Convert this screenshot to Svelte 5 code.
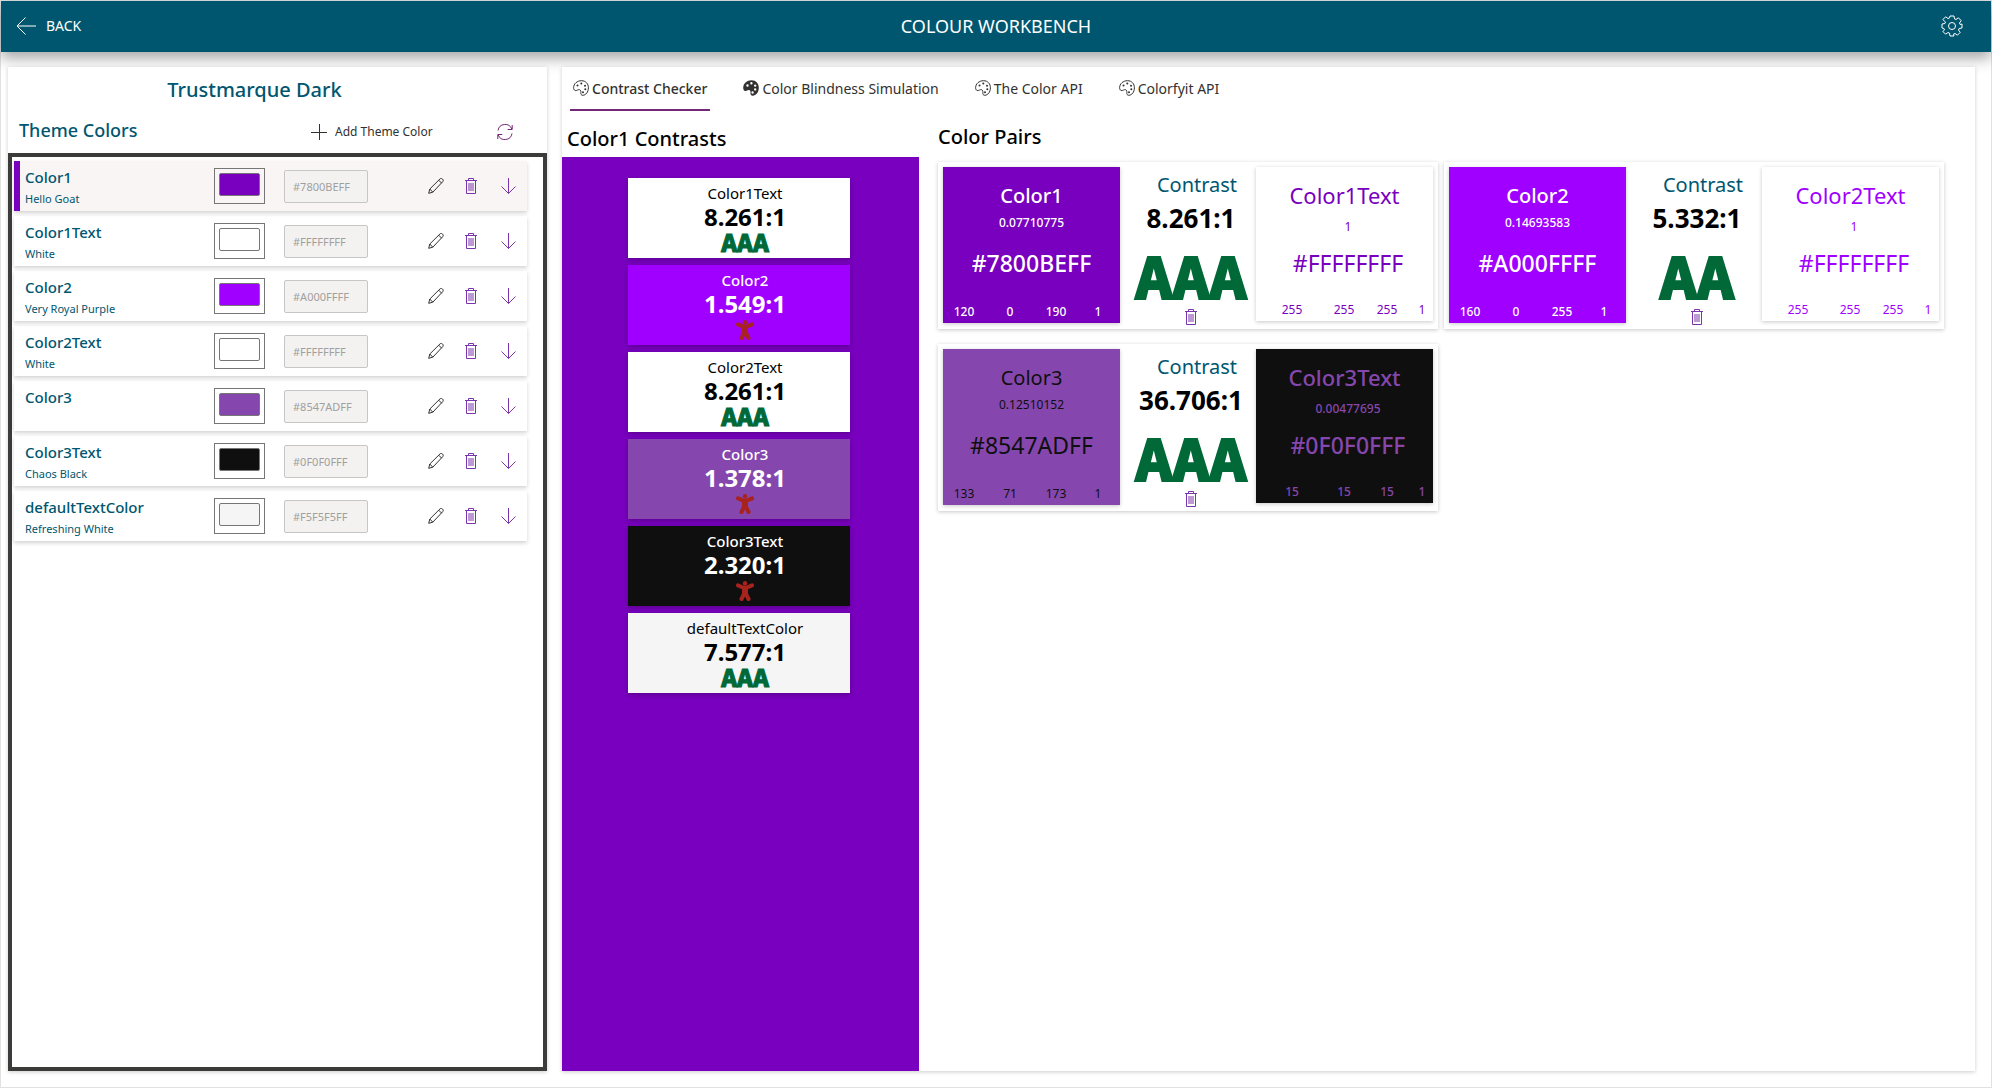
<script>
  const themeColors = [
    { name: 'Color1', alias: 'Hello Goat', hex: '#7800BE' },
    { name: 'Color1Text', alias: 'White', hex: '#FFFFFF' },
    { name: 'Color2', alias: 'Very Royal Purple', hex: '#A000FF' },
    { name: 'Color2Text', alias: 'White', hex: '#FFFFFF' },
    { name: 'Color3', alias: '', hex: '#8547AD' },
    { name: 'Color3Text', alias: 'Chaos Black', hex: '#0F0F0F' },
    { name: 'defaultTextColor', alias: 'Refreshing White', hex: '#F5F5F5' }
  ];

  const contrasts = [
    { name: 'Color1Text', ratio: '8.261:1', grade: 'AAA', bg: '#ffffff', fg: '#000000' },
    { name: 'Color2', ratio: '1.549:1', grade: '', bg: '#a000ff', fg: '#ffffff' },
    { name: 'Color2Text', ratio: '8.261:1', grade: 'AAA', bg: '#ffffff', fg: '#000000' },
    { name: 'Color3', ratio: '1.378:1', grade: '', bg: '#8547ad', fg: '#ffffff' },
    { name: 'Color3Text', ratio: '2.320:1', grade: '', bg: '#0f0f0f', fg: '#ffffff' },
    { name: 'defaultTextColor', ratio: '7.577:1', grade: 'AAA', bg: '#f5f5f5', fg: '#000000' }
  ];

  const pairs = [
    {
      ratio: '8.261:1',
      grade: 'AAA',
      base: { name: 'Color1', lum: '0.07710775', hex: '#7800BEFF', rgba: [120, 0, 190, 1] },
      text: { name: 'Color1Text', lum: '1', hex: '#FFFFFFFF', rgba: [255, 255, 255, 1] }
    },
    {
      ratio: '5.332:1',
      grade: 'AA',
      base: { name: 'Color2', lum: '0.14693583', hex: '#A000FFFF', rgba: [160, 0, 255, 1] },
      text: { name: 'Color2Text', lum: '1', hex: '#FFFFFFFF', rgba: [255, 255, 255, 1] }
    },
    {
      ratio: '36.706:1',
      grade: 'AAA',
      base: { name: 'Color3', lum: '0.12510152', hex: '#8547ADFF', rgba: [133, 71, 173, 1] },
      text: { name: 'Color3Text', lum: '0.00477695', hex: '#0F0F0FFF', rgba: [15, 15, 15, 1] }
    }
  ];

  const tabs = ['Contrast Checker', 'Color Blindness Simulation', 'The Color API', 'Colorfyit API'];

  let selected = $state(0);
  let activeTab = $state(0);
</script>

{#snippet trash()}
  <svg class="icon" viewBox="0 0 16 16" aria-hidden="true">
    <path d="M2 2.5h12M5.500 2.500v-2h5v2M3.500 2.500v13h9v-13M6 5v8M8 5v8M10 5v8" />
  </svg>
{/snippet}

{#snippet palette(solid)}
  <svg class="icon palette" class:solid viewBox="0 0 16 16" aria-hidden="true">
    {#if solid}
      <path
        fill-rule="evenodd"
        d="M8.500.3C13 .3 15.800 3.500 15.800 7.800c0 4.500-2.800 7.900-6 7.900-2 0-2.500-1.500-2.300-3 .2-1.700-.5-2.900-1.900-2.600-1.300.3-2.300 1.300-3.700.8C.7 10.400.2 9.200.2 7.700.2 3.500 4 .3 8.500.3zM3.300 5.500a1.200 1.200 0 1 0 2.400 0 1.200 1.200 0 1 0-2.400 0zM7.200 3.200a1.200 1.200 0 1 0 2.400 0 1.200 1.200 0 1 0-2.400 0zM11 5.600a1.200 1.200 0 1 0 2.400 0 1.200 1.200 0 1 0-2.400 0zM11 9.400a1.200 1.200 0 1 0 2.400 0 1.200 1.200 0 1 0-2.400 0zM8.400 12.500a1.200 1.200 0 1 0 2.400 0 1.200 1.200 0 1 0-2.400 0z"
      />
    {:else}
      <path
        d="M8.500.7C12.700.7 15.400 3.700 15.400 7.800c0 4.300-2.700 7.500-5.600 7.500-1.700 0-2.100-1.200-1.900-2.600.2-2-.7-3.400-2.400-3-1.300.3-2.200 1.200-3.400.8C1 10 .6 9 .6 7.700.6 3.700 4.300.7 8.500.7z"
      />
      <path class="dots" d="M4.500 5.500h.01M8.300 3.500h.01M12 5.800h.01M12.300 9.300h.01M10 12.300h.01" />
    {/if}
  </svg>
{/snippet}

<div class="app">
  <header>
    <button class="back">
      <svg class="icon" viewBox="0 0 20 20" aria-hidden="true"><path d="M20 10H1M9.500 1.500 1 10l8.500 8.500" /></svg>
      <span>BACK</span>
    </button>
    <h1>COLOUR WORKBENCH</h1>
    <button class="settings" aria-label="Settings">
      <svg class="icon" viewBox="0 0 22 22" aria-hidden="true">
        <path
          d="M9 1h4l.5 2.900 1.500.6 2.400-1.700 2.800 2.800-1.700 2.400.6 1.500L21 9v4l-2.900.5-.6 1.500 1.700 2.400-2.800 2.800-2.400-1.700-1.500.6L13 21H9l-.5-2.900-1.500-.6-2.400 1.700-2.800-2.800L3.500 15l-.6-1.500L1 13V9l2.900-.5.6-1.500L1.800 4.600l2.800-2.800L7 3.500l1.500-.6z"
        />
        <circle cx="11" cy="11" r="3.500" />
      </svg>
    </button>
  </header>

  <main>
    <section class="theme">
      <h2>Trustmarque Dark</h2>
      <div class="theme-bar">
        <h3>Theme Colors</h3>
        <button class="add">
          <svg class="icon" viewBox="0 0 16 16" aria-hidden="true"><path d="M0 8.500h16M8.500 0v16" /></svg>
          <span>Add Theme Color</span>
        </button>
        <button class="refresh" aria-label="Refresh">
          <svg class="icon" viewBox="0 0 16 16" aria-hidden="true">
            <path d="M1 6.500A7.200 7.200 0 0 1 14.800 5M15.200 1v4.500h-4.500M15 9.500A7.200 7.200 0 0 1 1.200 11M.8 15v-4.500h4.500" />
          </svg>
        </button>
      </div>

      <ul class="list">
        {#each themeColors as color, i}
          <li class="row" class:selected={selected === i}>
            <button class="label" onclick={() => (selected = i)}>
              <span class="name">{color.name}</span>
              <span class="alias">{color.alias}</span>
            </button>
            <input class="swatch" type="color" value={color.hex.toLowerCase()} aria-label="{color.name} colour" />
            <input class="hex" type="text" value="{color.hex}FF" disabled aria-label="{color.name} hex" />
            <div class="tools">
              <button class="edit" aria-label="Edit {color.name}">
                <svg class="icon" viewBox="0 0 16 16" aria-hidden="true">
                  <path d="M.7 15.300 1.800 11 12 .9c.8-.7 1.700-.6 2.500.1.900.8.900 1.900.2 2.700L4.800 14.200zM1.800 11l3 3.200M10.700 2.200l3 3" />
                </svg>
              </button>
              <button aria-label="Delete {color.name}">{@render trash()}</button>
              <button aria-label="Move {color.name} down">
                <svg class="icon" viewBox="0 0 16 16" aria-hidden="true"><path d="M8.500 0v15.500M1.500 8.500l7 7 7-7" /></svg>
              </button>
            </div>
          </li>
        {/each}
      </ul>
    </section>

    <section class="work">
      <nav class="tabs">
        {#each tabs as tab, i}
          <button class="tab" class:active={activeTab === i} onclick={() => (activeTab = i)}>
            {@render palette(i === 1)}
            <span>{tab}</span>
          </button>
        {/each}
      </nav>

      <div class="columns">
        <div class="contrasts">
          <h2>Color1 Contrasts</h2>
          <div class="board">
            {#each contrasts as c}
              <article class="contrast" style:background={c.bg} style:color={c.fg} class:light={c.fg === '#ffffff'}>
                <span class="contrast-name">{c.name}</span>
                <strong>{c.ratio}</strong>
                {#if c.grade}
                  <span class="grade">{c.grade}</span>
                {:else}
                  <svg class="fail" viewBox="0 0 18 20" role="img" aria-label="Fail">
                    <circle cx="9" cy="2.200" r="2.200" />
                    <path d="M2 4.300 7 6.500h4l5-2.200M9 7v4.500M8 8v5L5.500 18M10 8v5l2.500 5" />
                  </svg>
                {/if}
              </article>
            {/each}
          </div>
        </div>

        <div class="pairs">
          <h2>Color Pairs</h2>
          <div class="pair-list">
            {#each pairs as p}
              <article class="pair">
                <div class="chip" style:background={p.base.hex} style:color={p.text.hex} class:light={p.text.hex === '#FFFFFFFF'}>
                  <span class="chip-name">{p.base.name}</span>
                  <span class="lum">{p.base.lum}</span>
                  <span class="code">{p.base.hex}</span>
                  <div class="rgba">{#each p.base.rgba as v}<span>{v}</span>{/each}</div>
                </div>
                <div class="verdict">
                  <span class="caption">Contrast</span>
                  <strong>{p.ratio}</strong>
                  <span class="grade">{p.grade}</span>
                  <button aria-label="Delete pair">{@render trash()}</button>
                </div>
                <div class="chip text-chip" style:background={p.text.hex} style:color={p.base.hex} class:light={p.text.hex === '#0F0F0FFF'}>
                  <span class="chip-name">{p.text.name}</span>
                  <span class="lum">{p.text.lum}</span>
                  <span class="code">{p.text.hex}</span>
                  <div class="rgba">{#each p.text.rgba as v}<span>{v}</span>{/each}</div>
                </div>
              </article>
            {/each}
          </div>
        </div>
      </div>
    </section>
  </main>
</div>

<style>
  :global(body) {
    margin: 0;
    background: #fff;
  }
  .app,
  .app * {
    box-sizing: border-box;
  }
  .app {
    display: flex;
    flex-direction: column;
    min-height: 100vh;
    border: 1px solid #e1e1e1;
    font-family: 'Segoe UI', 'Noto Sans', 'Open Sans', sans-serif;
    color: #000;
  }
  h1,
  h2,
  h3,
  ul {
    margin: 0;
    padding: 0;
  }
  ul {
    list-style: none;
  }
  button {
    display: flex;
    align-items: center;
    padding: 0;
    border: 0;
    background: none;
    color: inherit;
    font: inherit;
    cursor: pointer;
  }
  .icon {
    display: block;
    flex: none;
    width: 16px;
    height: 16px;
    fill: none;
    stroke: currentColor;
    stroke-width: 1;
  }

  header {
    display: grid;
    grid-template-columns: 1fr auto 1fr;
    align-items: center;
    height: 51px;
    padding: 0 15px 2px;
    background: #00566f;
    color: #fff;
    box-shadow: 0 6px 14px rgba(0, 0, 0, 0.36);
  }
  .back {
    gap: 10px;
    font-size: 14px;
  }
  .back .icon {
    width: 20px;
    height: 20px;
  }
  h1 {
    font-size: 18px;
    font-weight: 400;
  }
  .settings {
    justify-self: end;
    padding-right: 13px;
  }
  .settings .icon {
    width: 22px;
    height: 22px;
  }

  main {
    display: flex;
    flex: 1;
    gap: 15px;
    padding: 15px 16px 16px 7px;
  }
  section {
    background: #fff;
    box-shadow: 0 1px 4px rgba(0, 0, 0, 0.2);
  }
  .theme {
    display: flex;
    flex-direction: column;
    flex: none;
    width: 539px;
  }
  .theme h2 {
    padding: 9px 46px 0 0;
    color: #00566f;
    font-size: 20px;
    font-weight: 500;
    line-height: 28px;
    text-align: center;
  }
  .theme-bar {
    display: flex;
    align-items: center;
    height: 49px;
    padding: 6px 34px 0 11px;
  }
  h3 {
    width: 292px;
    padding-bottom: 4px;
    color: #00566f;
    font-size: 18px;
    font-weight: 500;
    line-height: 24px;
  }
  .add {
    gap: 8px;
    font-size: 12px;
    color: #323130;
  }
  .refresh {
    margin-left: auto;
    color: #742774;
  }
  .list {
    display: flex;
    flex: 1;
    flex-direction: column;
    gap: 5px;
    padding: 4px 16px 4px 2px;
    border: 4px solid #3b3b39;
  }
  .row {
    display: flex;
    align-items: center;
    height: 50px;
    padding-right: 11px;
    border-left: 6px solid #fff;
    box-shadow: 0 2px 4px rgba(0, 0, 0, 0.18);
  }
  .row.selected {
    border-left-color: #7800be;
    background: #f9f5f4;
  }
  .label {
    flex: 1;
    flex-direction: column;
    align-items: flex-start;
    height: 50px;
    padding: 5px 0 0 5px;
    color: #00566f;
  }
  .name {
    font-size: 15px;
    font-weight: 500;
    line-height: 22px;
  }
  .alias {
    font-size: 11px;
    line-height: 22px;
  }
  .swatch {
    width: 51px;
    height: 36px;
    margin-right: 19px;
    padding: 4px 4px 7px;
    border: 1px solid #767676;
    border-radius: 0;
    background: transparent;
    appearance: none;
  }
  .swatch::-webkit-color-swatch-wrapper {
    padding: 0;
  }
  .swatch::-webkit-color-swatch {
    border: 1px solid #767676;
    border-radius: 2px;
  }
  .hex {
    width: 84px;
    height: 33px;
    margin-right: 60px;
    padding: 0 8px;
    border: 1px solid #c8c6c4;
    border-radius: 2px;
    background: #f3f2f1;
    color: #a19f9d;
    font-family: inherit;
    font-size: 11px;
  }
  .tools {
    display: flex;
    gap: 19px;
    color: #7a35ad;
  }
  .tools button:last-child {
    margin-left: 2px;
  }
  .edit {
    color: #323130;
  }

  .work {
    display: flex;
    flex: 1;
    flex-direction: column;
    min-width: 0;
  }
  .tabs {
    display: flex;
    gap: 30px;
    height: 44px;
    padding-left: 8px;
  }
  .tab {
    gap: 3px;
    padding: 0 3px;
    color: #323130;
    font-size: 14px;
    border-bottom: 2px solid transparent;
  }
  .tab.active {
    border-bottom-color: #742774;
    font-weight: 500;
  }
  .palette .dots {
    stroke-width: 2;
    stroke-linecap: round;
  }
  .palette.solid {
    fill: currentColor;
    stroke: none;
  }

  .columns {
    display: flex;
    flex: 1;
    gap: 19px;
  }
  .columns h2 {
    font-size: 20px;
    font-weight: 500;
    line-height: 28px;
  }
  .contrasts {
    display: flex;
    flex: none;
    flex-direction: column;
    width: 357px;
  }
  .contrasts h2 {
    padding: 14px 0 4px 5px;
  }
  .board {
    display: flex;
    flex: 1;
    flex-direction: column;
    align-items: center;
    gap: 7px;
    padding: 21px 3px 20px 0;
    background: #7800be;
  }
  .contrast {
    display: flex;
    flex-direction: column;
    align-items: center;
    width: 222px;
    height: 80px;
    padding: 4px 0 0 12px;
    box-shadow: 0 2px 5px rgba(0, 0, 0, 0.22);
  }
  .contrast-name {
    font-size: 15px;
    line-height: 22px;
  }
  .contrast.light .contrast-name {
    font-weight: 500;
  }
  .contrast strong {
    font-size: 24px;
    font-weight: 700;
    line-height: 26px;
  }
  .grade {
    color: #006937;
    font-family: 'Noto Sans CJK SC', 'Open Sans', sans-serif;
    font-weight: 900;
    -webkit-text-stroke: 1px #006937;
  }
  .contrast .grade {
    font-size: 24px;
    line-height: 24px;
  }
  .fail {
    width: 18px;
    height: 20px;
    margin-top: 3px;
    fill: #a8231d;
  }
  .fail path {
    fill: none;
    stroke: #a8231d;
    stroke-width: 4;
    stroke-linecap: round;
    stroke-linejoin: round;
  }

  .pairs {
    flex: 1;
    min-width: 0;
  }
  .pairs h2 {
    padding: 12px 0 11px;
  }
  .pair-list {
    display: flex;
    flex-wrap: wrap;
    gap: 15px 6px;
  }
  .pair {
    display: flex;
    padding: 5px 5px 4px;
    box-shadow: 0 1px 4px rgba(0, 0, 0, 0.22);
  }
  .chip {
    display: flex;
    flex-direction: column;
    align-items: center;
    width: 177px;
    height: 156px;
    padding-top: 15px;
    box-shadow: 0 1px 4px rgba(0, 0, 0, 0.22);
  }
  .chip.light {
    font-weight: 500;
  }
  .chip-name {
    font-size: 20px;
    line-height: 28px;
  }
  .lum {
    font-size: 12px;
    line-height: 26px;
  }
  .code {
    padding-top: 11px;
    font-size: 23px;
    line-height: 32px;
  }
  .rgba {
    display: grid;
    grid-template-columns: 42px 50px 42px 42px;
    align-self: stretch;
    padding-top: 24px;
    font-size: 12px;
    line-height: 18px;
    text-align: center;
  }
  .text-chip {
    height: 154px;
    padding-top: 14px;
  }
  .text-chip .chip-name {
    font-size: 22px;
  }
  .text-chip .lum {
    padding: 5px 0 0 7px;
  }
  .text-chip .code {
    padding: 7px 0 0 7px;
  }
  .text-chip .rgba {
    grid-template-columns: 64px 40px 46px 24px;
    padding: 22px 0 0 4px;
  }
  .verdict {
    display: flex;
    flex-direction: column;
    align-items: center;
    width: 136px;
    padding: 4px 0 0 6px;
  }
  .caption {
    padding-left: 12px;
    color: #00566f;
    font-size: 20px;
    line-height: 28px;
  }
  .verdict strong {
    font-size: 26px;
    line-height: 39px;
  }
  .verdict .grade {
    padding-top: 2px;
    font-size: 56px;
    line-height: 69px;
    -webkit-text-stroke-width: 2px;
  }
  .verdict button {
    color: #7a35ad;
  }
</style>
